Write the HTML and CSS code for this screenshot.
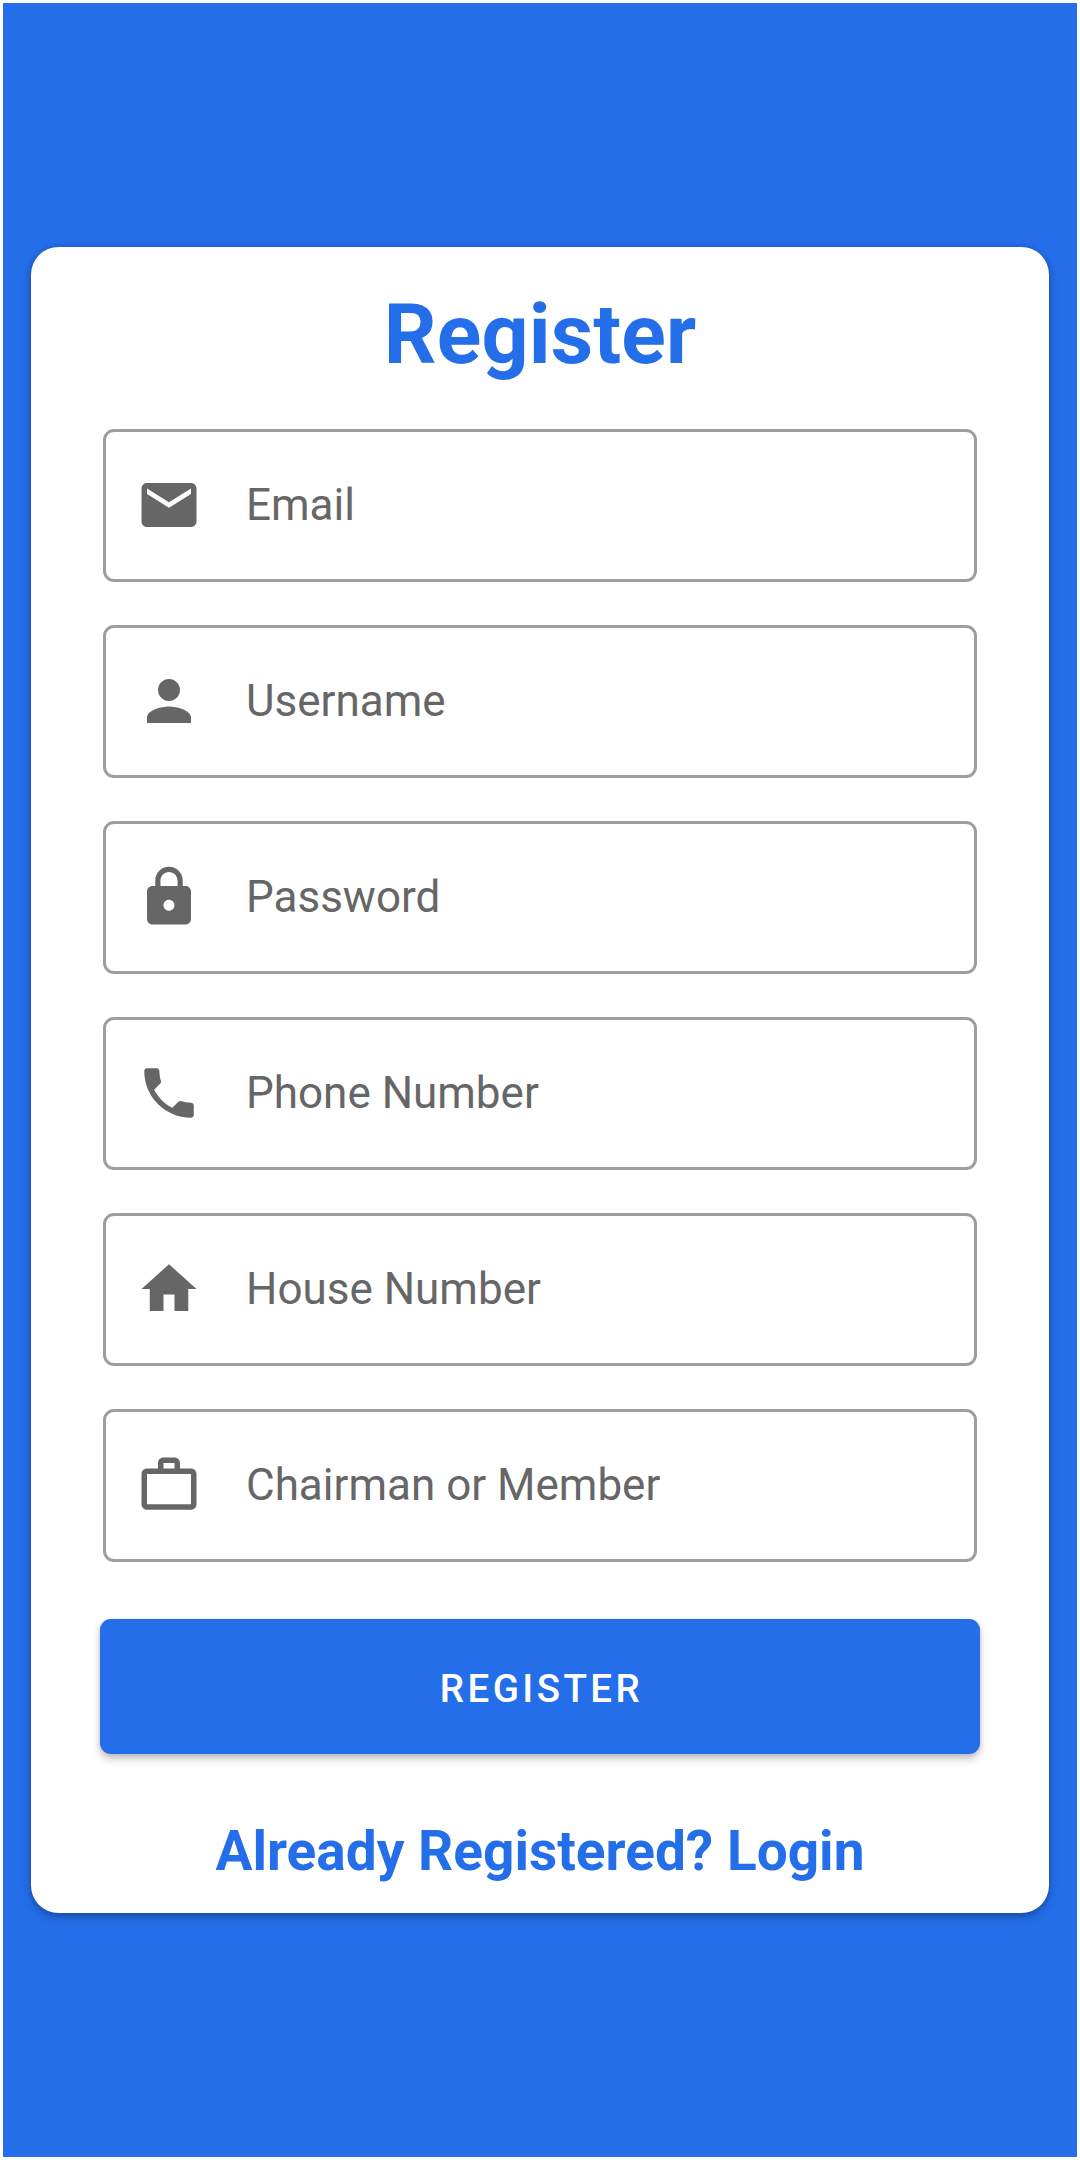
FILE: index.html
```html
<!DOCTYPE html>
<html lang="en">
<head>
<meta charset="utf-8">
<title>Register</title>
<link rel="stylesheet" href="styles.css">
</head>
<body>
<main class="screen">
  <form class="card">
    <h1 class="title">Register</h1>
    <div class="fields">
      <label class="field">
        <svg class="icon" viewBox="0 0 24 24"><path d="M20 4H4c-1.1 0-1.99.9-1.99 2L2 18c0 1.100.9 2 2 2h16c1.100 0 2-.9 2-2V6c0-1.100-.9-2-2-2zm0 4l-8 5-8-5V6l8 5 8-5v2z"/></svg>
        <span class="hint">Email</span>
      </label>
      <label class="field">
        <svg class="icon" viewBox="0 0 24 24"><path d="M12 12c2.210 0 4-1.790 4-4s-1.790-4-4-4-4 1.790-4 4 1.790 4 4 4zm0 2c-2.670 0-8 1.340-8 4v2h16v-2c0-2.660-5.330-4-8-4z"/></svg>
        <span class="hint">Username</span>
      </label>
      <label class="field">
        <svg class="icon" viewBox="0 0 24 24"><path d="M18 8h-1V6c0-2.760-2.240-5-5-5S7 3.240 7 6v2H6c-1.100 0-2 .9-2 2v10c0 1.100.9 2 2 2h12c1.100 0 2-.9 2-2V10c0-1.100-.9-2-2-2zm-6 9c-1.100 0-2-.9-2-2s.9-2 2-2 2 .9 2 2-.9 2-2 2zm3.100-9H8.900V6c0-1.710 1.390-3.100 3.100-3.100 1.710 0 3.100 1.390 3.100 3.100v2z"/></svg>
        <span class="hint">Password</span>
      </label>
      <label class="field">
        <svg class="icon" viewBox="0 0 24 24"><path d="M6.620 10.790c1.440 2.830 3.760 5.140 6.590 6.590l2.200-2.200c.27-.27.67-.36 1.020-.24 1.120.37 2.330.57 3.570.57.55 0 1 .45 1 1V20c0 .55-.45 1-1 1-9.390 0-17-7.610-17-17 0-.55.45-1 1-1h3.500c.55 0 1 .45 1 1 0 1.250.2 2.450.57 3.570.11.35.03.74-.25 1.020l-2.200 2.200z"/></svg>
        <span class="hint">Phone Number</span>
      </label>
      <label class="field">
        <svg class="icon" viewBox="0 0 24 24"><path d="M10 20v-6h4v6h5v-8h3L12 3 2 12h3v8z"/></svg>
        <span class="hint">House Number</span>
      </label>
      <label class="field">
        <svg class="icon" viewBox="0 0 24 24"><path fill-rule="evenodd" d="M14 6V4h-4v2h4zM4 8v11h16V8H4zm16-2c1.110 0 2 .89 2 2v11c0 1.110-.89 2-2 2H4c-1.110 0-2-.89-2-2l.01-11c0-1.110.88-2 1.990-2h4V4c0-1.110.89-2 2-2h4c1.110 0 2 .89 2 2v2h4z"/></svg>
        <span class="hint">Chairman or Member</span>
      </label>
    </div>
    <button class="submit" type="button">Register</button>
    <a class="login">Already Registered? Login</a>
  </form>
</main>
</body>
</html>
```
FILE: styles.css
```css
* {
  box-sizing: border-box;
}

body {
  margin: 0;
  background: #fff;
  font-family: Roboto, "Liberation Sans", sans-serif;
}

.screen {
  display: flex;
  align-items: center;
  height: 2160px;
  padding: 0 28px;
  border: 3px solid #fff;
  background: #246eea;
}

.card {
  display: flex;
  flex-direction: column;
  width: 100%;
  height: 1666px;
  padding: 33px 69px 25px;
  border-radius: 27.5px;
  background: #fff;
  box-shadow: 0 4px 10px rgba(0, 0, 0, 0.26), 0 0 5px rgba(0, 0, 0, 0.16);
}

.title {
  margin: 0 0 39px;
  font-size: 82.5px;
  font-weight: 700;
  line-height: 110px;
  letter-spacing: 0.15px;
  text-align: center;
  color: #246eea;
}

.fields {
  display: flex;
  flex-direction: column;
  gap: 43px;
  padding: 0 3px;
}

.field {
  display: flex;
  align-items: center;
  gap: 44px;
  height: 153px;
  padding: 0 30px 1px;
  border: 3px solid #9e9e9e;
  border-radius: 11px;
}

.icon {
  width: 66px;
  height: 66px;
  fill: #666;
}

.hint {
  font-size: 44px;
  line-height: 60px;
  color: #666;
}

.submit {
  height: 135px;
  margin: 57px 0 60px;
  padding: 4px 0 0 3px;
  border: 0;
  border-radius: 11px;
  background: #246eea;
  box-shadow: 0 5px 8px rgba(0, 0, 0, 0.22), 0 1px 4px rgba(0, 0, 0, 0.12);
  font-family: inherit;
  font-size: 38.5px;
  font-weight: 500;
  letter-spacing: 3.4375px;
  text-transform: uppercase;
  color: #fff;
}

.login {
  font-size: 55px;
  font-weight: 700;
  line-height: 74px;
  text-align: center;
  color: #246eea;
}
```
